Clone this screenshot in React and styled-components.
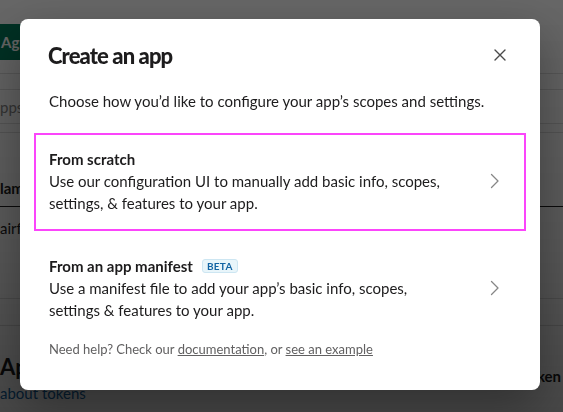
import React from 'react'
import styled, { createGlobalStyle } from 'styled-components'

const Global = createGlobalStyle`
  html, body { margin: 0; padding: 0; }
  body {
    width: 563px;
    height: 412px;
    overflow: hidden;
    font-family: Lato, 'Noto Sans', sans-serif;
    background: #fff;
    color: #1d1c1d;
  }
`

/* ---------- page behind the dialog ---------- */

const Page = styled.div`
  width: 563px;
  overflow: hidden;
  padding-top: 24px;
  display: flex;
  flex-direction: column;
`

const TopBar = styled.div`
  display: flex;
  align-items: center;
  height: 36px;
  margin-bottom: 13px;
`

const GreenButton = styled.div`
  background: #007a5a;
  color: #fff;
  font-weight: 700;
  font-size: 15px;
  height: 36px;
  padding: 0 16px 0 1px;
  display: flex;
  align-items: center;
  border-radius: 0 4px 4px 0;
`

const Rule = styled.div`
  height: 0;
  border-top: 1px solid ${p => (p.$dark ? '#1d1c1d' : '#dddddd')};
`

const Row = styled.div`
  height: ${p => p.$h}px;
  display: flex;
  align-items: ${p => (p.$bottom ? 'flex-end' : 'center')};
  padding-bottom: ${p => (p.$bottom ? '9px' : '0')};
  box-sizing: border-box;
  font-size: 15px;
  white-space: nowrap;
  font-weight: ${p => (p.$bold ? 700 : 400)};
  color: ${p => (p.$muted ? '#868686' : '#1d1c1d')};
`

const BottomRow = styled.div`
  display: flex;
  justify-content: space-between;
  align-items: center;
  padding-top: 26px;
  height: 28px;
`

const BigHeading = styled.div`
  font-size: 22px;
  font-weight: 700;
`

const TokenButton = styled.div`
  padding: 0 2px 0 0;
  font-size: 15px;
  font-weight: 700;
  margin-top: 20px;
`

const Link = styled.div`
  color: #1264a3;
  font-size: 15px;
  line-height: 20px;
  margin-top: 3px;
`

const Overlay = styled.div`
  position: fixed;
  inset: 0;
  background: linear-gradient(180deg, rgba(0, 0, 0, 0.6) 0%, rgba(0, 0, 0, 0.66) 60%, rgba(0, 0, 0, 0.72) 100%);
  display: flex;
  justify-content: flex-start;
  align-items: flex-start;
  padding: 19px 0 0 20px;
`

/* ---------- dialog ---------- */

const Dialog = styled.div`
  width: 520px;
  background: #fff;
  border-radius: 8px;
  box-shadow: 0 18px 48px rgba(0, 0, 0, 0.35);
  padding: 0 0 32px;
  box-sizing: border-box;
  color: #1d1c1d;
`

const Header = styled.div`
  display: flex;
  align-items: center;
  justify-content: space-between;
  padding: 18px 28px 0 28px;
  height: 36px;
  box-sizing: content-box;
`

const Title = styled.h1`
  margin: 0;
  font-size: 22px;
  font-weight: 900;
  letter-spacing: -0.9px;
`

const CloseButton = styled.button`
  width: 24px;
  height: 24px;
  border: 0;
  background: none;
  padding: 0;
  display: flex;
  align-items: center;
  justify-content: center;
  color: #4a4a4a;
`

const Intro = styled.p`
  margin: 17px 28px 21px 29px;
  font-size: 15px;
  line-height: 22px;
`

const Options = styled.div`
  display: flex;
  flex-direction: column;
  gap: 9px;
  padding: 0 14px;
`

const Option = styled.div`
  display: flex;
  align-items: center;
  border: 2px solid ${p => (p.$focused ? '#fb45fb' : 'transparent')};
  padding: 13px 24px 15px 13px;
`

const OptionText = styled.div`
  flex: 1;
`

const OptionTitle = styled.div`
  display: flex;
  align-items: center;
  gap: 9px;
  font-size: 15px;
  font-weight: 700;
  line-height: 22px;
`

const OptionBody = styled.div`
  font-size: 15px;
  line-height: 22px;
  max-width: 410px;
`

const Badge = styled.span`
  font-size: 10px;
  font-weight: 700;
  letter-spacing: 0.3px;
  color: #1264a3;
  background: #e8f5fa;
  border: 1px solid #cde6f2;
  border-radius: 3px;
  padding: 0 4px;
  line-height: 12px;
`

const Chevron = styled.svg`
  width: 10px;
  height: 16px;
  flex-shrink: 0;
`

const Footer = styled.p`
  margin: 2px 29px 0;
  font-size: 13px;
  line-height: 18px;
  color: #616061;

  a {
    color: #616061;
    text-decoration: underline;
  }
`

const options = [
  {
    title: 'From scratch',
    body: 'Use our configuration UI to manually add basic info, scopes, settings, & features to your app.',
    focused: true,
  },
  {
    title: 'From an app manifest',
    badge: 'BETA',
    body: 'Use a manifest file to add your app’s basic info, scopes, settings & features to your app.',
  },
]

const App = () => {
  return (
    <>
      <Global />
      <Page>
        <TopBar>
          <GreenButton>Agree</GreenButton>
        </TopBar>
        <Rule />
        <Row $h={15} />
        <Rule />
        <Row $h={33} $muted>pps</Row>
        <Rule />
        <Row $h={8} />
        <Rule />
        <Row $h={73} $bold $bottom>lame</Row>
        <Rule $dark />
        <Row $h={42}>airforce</Row>
        <Row $h={49} />
        <Rule />
        <Row $h={26} />
        <Rule />
        <BottomRow>
          <BigHeading>Apps</BigHeading>
          <TokenButton>Generate Token</TokenButton>
        </BottomRow>
        <Link>about tokens</Link>
      </Page>

      <Overlay>
        <Dialog>
          <Header>
            <Title>Create an app</Title>
            <CloseButton aria-label="Close">
              <svg width="12" height="12" viewBox="0 0 12 12">
                <path d="M1 1L11 11M11 1L1 11" stroke="currentColor" strokeWidth="1.4" strokeLinecap="round" />
              </svg>
            </CloseButton>
          </Header>
          <Intro>Choose how you’d like to configure your app’s scopes and settings.</Intro>
          <Options>
            {options.map(o => (
              <Option key={o.title} $focused={o.focused}>
                <OptionText>
                  <OptionTitle>
                    {o.title}
                    {o.badge && <Badge>{o.badge}</Badge>}
                  </OptionTitle>
                  <OptionBody>{o.body}</OptionBody>
                </OptionText>
                <Chevron viewBox="0 0 10 16">
                  <path d="M1.5 1.5L8 8L1.5 14.5" fill="none" stroke="#868686" strokeWidth="1.3" strokeLinecap="round" strokeLinejoin="round" />
                </Chevron>
              </Option>
            ))}
          </Options>
          <Footer>
            Need help? Check our <a href="#">documentation</a>, or <a href="#">see an example</a>
          </Footer>
        </Dialog>
      </Overlay>
    </>
  )
}

export default App
